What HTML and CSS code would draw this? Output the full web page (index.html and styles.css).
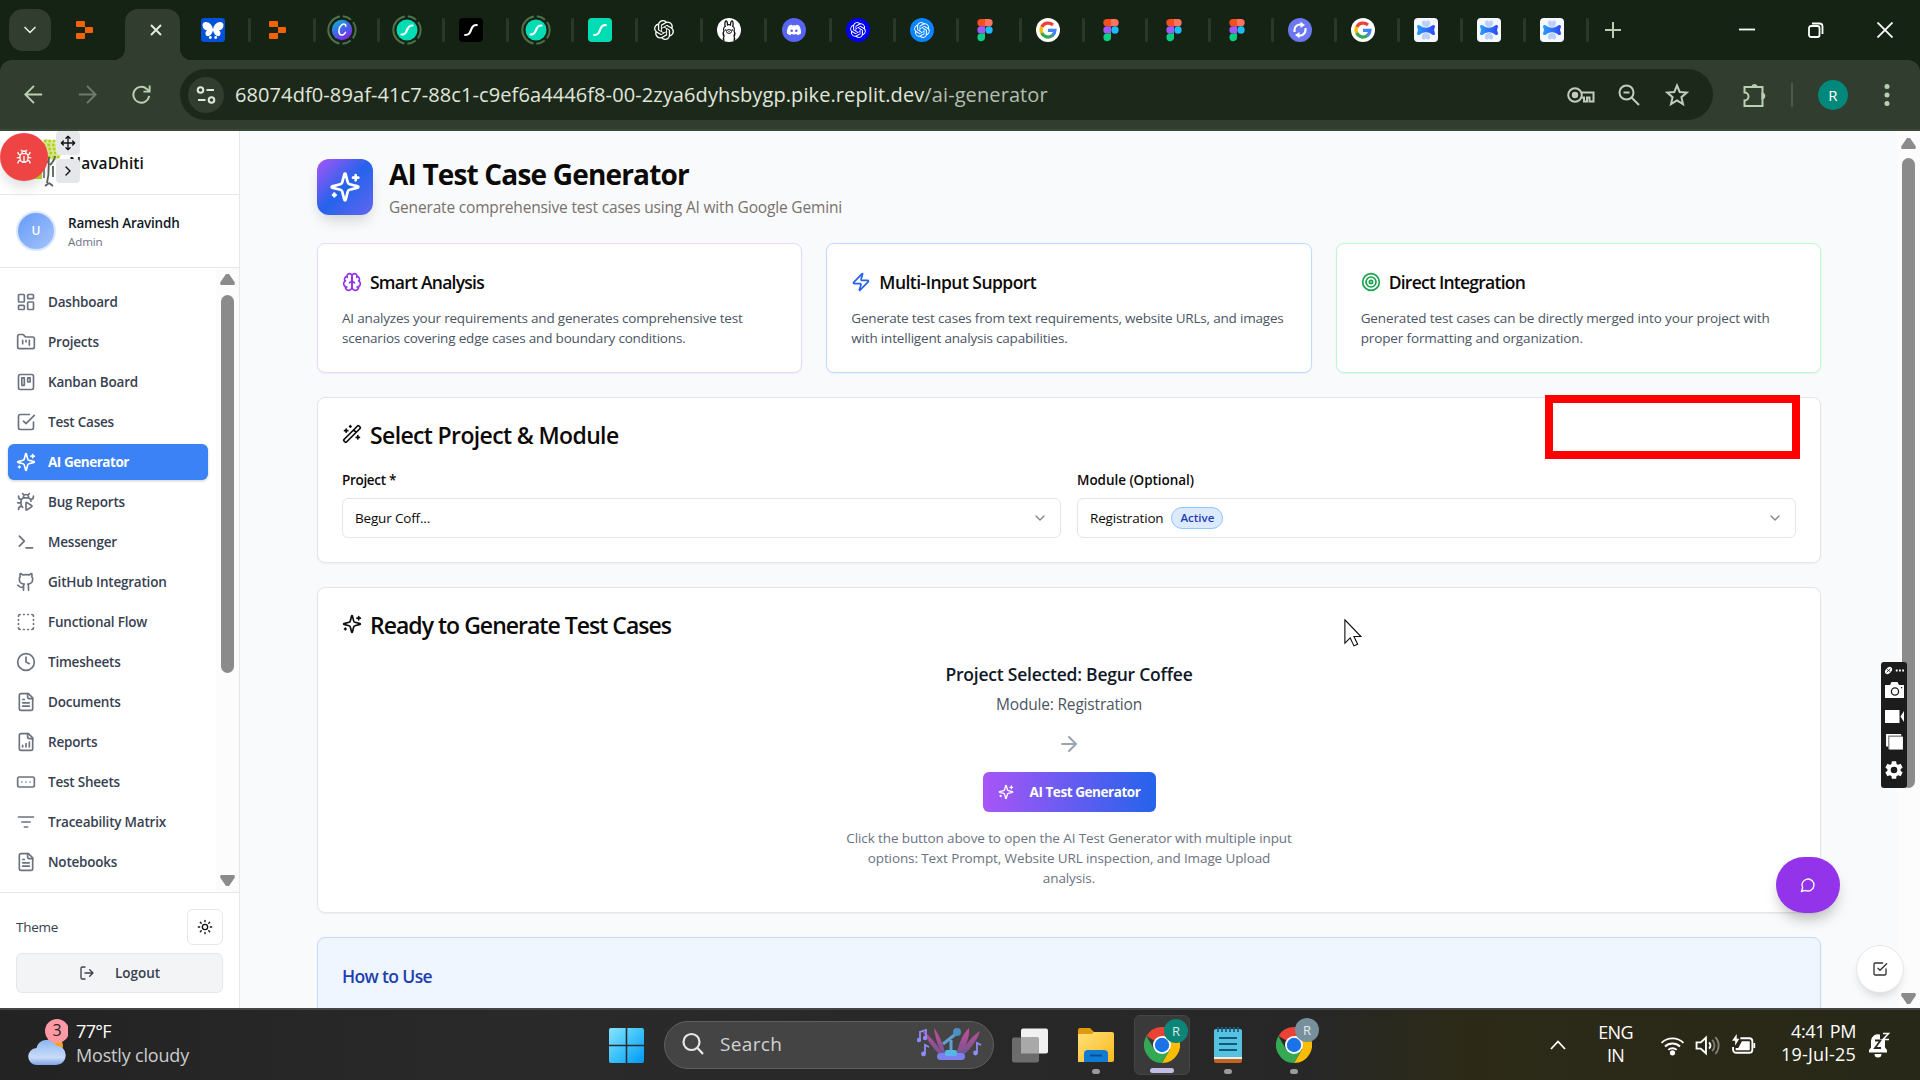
FILE: index.html
```html
<!DOCTYPE html>
<html lang="en">
<head>
<meta charset="utf-8">
<title>AI Test Case Generator</title>
<link rel="stylesheet" href="styles.css">
</head>
<body>
<svg class="defs" aria-hidden="true">
  <linearGradient id="g-canva" x1="0" y1="0" x2="0.6" y2="1"><stop offset="0" stop-color="#00c4cc"/><stop offset=".5" stop-color="#3a6ee8"/><stop offset="1" stop-color="#7d2ae8"/></linearGradient>
  <linearGradient id="g-win" x1="0" y1="0" x2="1" y2="1"><stop offset="0" stop-color="#8ae4ff"/><stop offset=".5" stop-color="#3cc2f9"/><stop offset="1" stop-color="#0098f8"/></linearGradient>
  <linearGradient id="g-folder" x1="0" y1="0" x2="1" y2="1"><stop offset="0" stop-color="#ffe07a"/><stop offset="1" stop-color="#f9b91c"/></linearGradient>
  <linearGradient id="g-cloud" x1="0" y1="0" x2="0" y2="1"><stop offset="0" stop-color="#8db6f2"/><stop offset=".7" stop-color="#c9dcf8"/><stop offset="1" stop-color="#7ea3e6"/></linearGradient>
  <linearGradient id="g-blade" x1="0" y1="0" x2="0" y2="1"><stop offset="0" stop-color="#e44ba8"/><stop offset="1" stop-color="#6c5b9e"/></linearGradient>
  <linearGradient id="g-bow" x1="0" y1="0" x2="1" y2="0"><stop offset="0" stop-color="#2a9dff"/><stop offset="1" stop-color="#3048f5"/></linearGradient>

  <symbol id="replit" viewBox="0 0 24 24"><path fill="#f26207" d="M4 3h7a1 1 0 0 1 1 1v5H4a1 1 0 0 1-1-1V4a1 1 0 0 1 1-1zM12 9h7a1 1 0 0 1 1 1v4a1 1 0 0 1-1 1h-7zM4 15h8v5a1 1 0 0 1-1 1H4a1 1 0 0 1-1-1v-4a1 1 0 0 1 1-1z"/></symbol>
  <symbol id="butterfly" viewBox="0 0 24 24"><rect width="24" height="24" rx="3" fill="#0052d9"/><path fill="#fff" d="M12 11.500C11.500 7 8 3.800 4.500 4 2.200 4.200 1.300 6 1.600 8c.3 2.600 2 4.200 4.600 4.600C4 13.600 4 16.500 5.500 18c3 .8 5.500-1.500 6.500-5.500 1 4 3.500 6.300 6.500 5.500 1.500-1.500 1.500-4.400-.7-5.400 2.600-.4 4.300-2 4.600-4.600.3-2-.6-3.800-2.900-4C16 3.800 12.500 7 12 11.500z"/><circle cx="9.300" cy="19.500" r="1.400" fill="#fff"/><circle cx="14.700" cy="19.500" r="1.400" fill="#fff"/></symbol>
  <symbol id="canva" viewBox="0 0 30 30"><circle cx="15" cy="15" r="13.700" fill="none" stroke="#4c7048" stroke-width="2" stroke-dasharray="9 3 9 3 38 3 9 3 9"/><circle cx="15" cy="15" r="10.200" fill="url(#g-canva)"/><path d="M18.800 11.200c.3-2-2-2.800-4-1.400-3 2.200-4 8-1.500 9.800 1.800 1.200 4.200-.2 5.200-2.200" fill="none" stroke="#fff" stroke-width="1.500" stroke-linecap="round"/></symbol>
  <symbol id="slash-ring" viewBox="0 0 30 30"><circle cx="15" cy="15" r="13.700" fill="none" stroke="#4c7048" stroke-width="2" stroke-dasharray="9 3 9 3 38 3 9 3 9"/><circle cx="15" cy="15" r="10.500" fill="#00dcb4"/><path d="M9.500 19.500c4 0 4.500-2 5.500-4.500s1.500-4.500 5.500-4.500" fill="none" stroke="#fff" stroke-width="2.200" stroke-linecap="round"/></symbol>
  <symbol id="slash" viewBox="0 0 24 24"><path d="M5 18c5 0 5.500-2.500 7-6s2-6 7-6" fill="none" stroke="#fff" stroke-width="2.600" stroke-linecap="round"/></symbol>
  <symbol id="openai" viewBox="0 0 24 24"><path fill="currentColor" d="M22.2819 9.8211a5.9847 5.9847 0 0 0-.5157-4.9108 6.0462 6.0462 0 0 0-6.5098-2.9A6.0651 6.0651 0 0 0 4.9807 4.1818a5.9847 5.9847 0 0 0-3.9977 2.9 6.0462 6.0462 0 0 0 .7427 7.0966 5.98 5.98 0 0 0 .511 4.9107 6.051 6.051 0 0 0 6.5146 2.9001A5.9847 5.9847 0 0 0 13.2599 24a6.0557 6.0557 0 0 0 5.7718-4.2058 5.9894 5.9894 0 0 0 3.9977-2.9001 6.0557 6.0557 0 0 0-.7475-7.0729zm-9.022 12.6081a4.4755 4.4755 0 0 1-2.8764-1.0408l.1419-.0804 4.7783-2.7582a.7948.7948 0 0 0 .3927-.6813v-6.7369l2.02 1.1686a.071.071 0 0 1 .038.052v5.5826a4.504 4.504 0 0 1-4.4945 4.4944zm-9.6607-4.1254a4.4708 4.4708 0 0 1-.5346-3.0137l.142.0852 4.783 2.7582a.7712.7712 0 0 0 .7806 0l5.8428-3.3685v2.3324a.0804.0804 0 0 1-.0332.0615L9.74 19.9502a4.4992 4.4992 0 0 1-6.1408-1.6464zM2.3408 7.8956a4.485 4.485 0 0 1 2.3655-1.9728V11.6a.7664.7664 0 0 0 .3879.6765l5.8144 3.3543-2.0201 1.1685a.0757.0757 0 0 1-.071 0l-4.8303-2.7865A4.504 4.504 0 0 1 2.3408 7.872zm16.5963 3.8558L13.1038 8.364 15.1192 7.2a.0757.0757 0 0 1 .071 0l4.8303 2.7913a4.4944 4.4944 0 0 1-.6765 8.1042v-5.6772a.79.79 0 0 0-.407-.667zm2.0107-3.0231l-.142-.0852-4.7735-2.7818a.7759.7759 0 0 0-.7854 0L9.409 9.2297V6.8974a.0662.0662 0 0 1 .0284-.0615l4.8303-2.7866a4.4992 4.4992 0 0 1 6.6802 4.66zM8.3065 12.863l-2.02-1.1638a.0804.0804 0 0 1-.038-.0567V6.0742a4.4992 4.4992 0 0 1 7.3757-3.4537l-.142.0805L8.704 5.459a.7948.7948 0 0 0-.3927.6813zm1.0976-2.3654l2.602-1.4998 2.6069 1.4998v2.9994l-2.5974 1.4997-2.6067-1.4997Z"/></symbol>
  <symbol id="llama" viewBox="0 0 24 24"><circle cx="12" cy="12" r="12" fill="#fff"/><path d="M7 23c-1-2-.5-4 0-5-1.200-1.500-1-3.500 0-5-.8-2 0-4 1.200-4.500C7.500 6 8 3 9 3s1.500 2.500 1.500 4c1-.4 2-.4 3 0 0-1.500.5-4 1.500-4s1.500 3 .8 5.500C17 9 17.800 11 17 13c1 1.500 1.200 3.500 0 5 .5 1 1 3 0 5" fill="none" stroke="#111" stroke-width="1.300"/><ellipse cx="12" cy="13.500" rx="2.500" ry="1.900" fill="none" stroke="#111" stroke-width="1"/><circle cx="8.800" cy="12" r=".8"/><circle cx="15.200" cy="12" r=".8"/><path d="M12 13v1" stroke="#111"/></symbol>
  <symbol id="discord" viewBox="0 0 24 24"><circle cx="12" cy="12" r="12" fill="#5865f2"/><path fill="#fff" d="M17 7.600A11 11 0 0 0 14.200 6.700l-.4.800a10 10 0 0 0-3.600 0l-.4-.8A11 11 0 0 0 7 7.600C5.200 10.300 4.700 13 5 15.600a11 11 0 0 0 3.400 1.700l.8-1.200-1.100-.6c2.500 1.200 5.400 1.200 7.800 0l-1.100.6.800 1.200a11 11 0 0 0 3.400-1.700c.3-3-.5-5.600-2-8z"/><circle cx="9.700" cy="12.700" r="1.300" fill="#5865f2"/><circle cx="14.300" cy="12.700" r="1.300" fill="#5865f2"/></symbol>
  <symbol id="figma" viewBox="0 0 24 24"><path fill="#f24e1e" d="M8 1h4v7.300H8A3.650 3.650 0 0 1 8 1z"/><path fill="#ff7262" d="M12 1h4a3.650 3.650 0 0 1 0 7.300h-4z"/><path fill="#a259ff" d="M8 8.300h4v7.300H8a3.650 3.650 0 0 1 0-7.300z"/><circle cx="16" cy="12" r="3.650" fill="#1abcfe"/><path fill="#0acf83" d="M8 15.600h4v3.700a3.800 3.800 0 1 1-4-3.700z"/></symbol>
  <symbol id="google" viewBox="0 0 24 24"><circle cx="12" cy="12" r="12" fill="#fff"/><g fill="none" stroke-width="3.200"><path stroke="#ea4335" d="M5.800 9A7 7 0 0 1 16.900 7"/><path stroke="#fbbc05" d="M5.800 15.200a7 7 0 0 1 0-6.400"/><path stroke="#34a853" d="M16.700 17.300A7 7 0 0 1 5.800 15"/><path stroke="#4285f4" d="M12 12.300h7a7 7 0 0 1-2.500 5.100"/></g></symbol>
  <symbol id="sync" viewBox="0 0 24 24"><circle cx="12" cy="12" r="12" fill="#6b78f0"/><path d="M6.500 14V12A5.500 5.500 0 0 1 13 6.600M17.500 10v2a5.500 5.500 0 0 1-6.500 5.400" fill="none" stroke="#fff" stroke-width="2.200"/><path fill="#fff" d="M12.500 3.800 17 7l-4.500 3zM11.500 14 7 17l4.500 3.200z"/></symbol>
  <symbol id="bow" viewBox="0 0 24 24"><rect width="24" height="24" rx="4" fill="#f5f7fe"/><path fill="#b9d0fb" d="M8 5.500a2 2 0 0 1 4-1.500 2 2 0 0 1 4 1.500C16 8 14 9 12 9S8 8 8 5.500zM8 18.500a2 2 0 0 0 4 1.500 2 2 0 0 0 4-1.500C16 16 14 15 12 15s-4 1-4 3.500z"/><path fill="url(#g-bow)" d="M3 8.500c0-1.500 1.500-2 3-1 2 1.500 4 2.200 6 2.200s4-.7 6-2.200c1.500-1 3-.5 3 1L20 12l1 3.500c0 1.500-1.500 2-3 1-2-1.500-4-2.200-6-2.200s-4 .7-6 2.200c-1.500 1-3 .5-3-1L4 12z"/></symbol>

  <symbol id="dashboard" viewBox="0 0 24 24"><rect width="7" height="9" x="3" y="3" rx="1"/><rect width="7" height="5" x="14" y="3" rx="1"/><rect width="7" height="9" x="14" y="12" rx="1"/><rect width="7" height="5" x="3" y="16" rx="1"/></symbol>
  <symbol id="folder-kanban" viewBox="0 0 24 24"><path d="M4 20h16a2 2 0 0 0 2-2V8a2 2 0 0 0-2-2h-7.930a2 2 0 0 1-1.660-.9l-.82-1.200A2 2 0 0 0 7.930 3H4a2 2 0 0 0-2 2v13c0 1.100.9 2 2 2Z"/><path d="M8 10v4M12 10v2M16 10v6"/></symbol>
  <symbol id="trello" viewBox="0 0 24 24"><rect width="18" height="18" x="3" y="3" rx="2"/><rect width="3" height="9" x="7" y="7"/><rect width="3" height="5" x="14" y="7"/></symbol>
  <symbol id="check-square" viewBox="0 0 24 24"><path d="m9 11 3 3L22 4"/><path d="M21 12v7a2 2 0 0 1-2 2H5a2 2 0 0 1-2-2V5a2 2 0 0 1 2-2h11"/></symbol>
  <symbol id="sparkles" viewBox="0 0 24 24"><path d="M9.937 15.500A2 2 0 0 0 8.500 14.063l-6.135-1.582a.5.5 0 0 1 0-.962L8.500 9.936A2 2 0 0 0 9.937 8.500l1.582-6.135a.5.5 0 0 1 .963 0L14.063 8.500A2 2 0 0 0 15.500 9.937l6.135 1.581a.5.5 0 0 1 0 .964L15.500 14.063a2 2 0 0 0-1.437 1.437l-1.582 6.135a.5.5 0 0 1-.963 0z"/><path d="M20 3v4M22 5h-4M4 17v2M5 18H3"/></symbol>
  <symbol id="bug-play" viewBox="0 0 24 24"><path d="M12.765 21.522a.5.5 0 0 1-.765-.424v-8.196a.5.5 0 0 1 .765-.424l5.878 3.674a1 1 0 0 1 0 1.696z"/><path d="M14.120 3.880 16 2M18 11a4 4 0 0 0-4-4h-4a4 4 0 0 0-4 4v3a6.100 6.100 0 0 0 2 4.500M20.970 5c0 2.100-1.600 3.800-3.500 4M3 21c0-2.100 1.700-3.900 3.800-4M6 13H2M6.530 9C4.600 8.800 3 7.100 3 5M8 2l1.880 1.880M9 7.130v-1a3.003 3.003 0 1 1 6 0v1"/></symbol>
  <symbol id="terminal" viewBox="0 0 24 24"><path d="m4 17 6-6-6-6M12 19h8"/></symbol>
  <symbol id="github" viewBox="0 0 24 24"><path d="M15 22v-4a4.800 4.800 0 0 0-1-3.500c3 0 6-2 6-5.500.08-1.250-.27-2.480-1-3.500.28-1.150.28-2.350 0-3.500 0 0-1 0-3 1.500-2.640-.5-5.360-.5-8 0C6 2 5 2 5 2c-.3 1.150-.3 2.350 0 3.500A5.403 5.403 0 0 0 4 9c0 3.500 3 5.500 6 5.500-.39.49-.68 1.050-.85 1.650-.17.6-.22 1.230-.15 1.850v4"/><path d="M9 18c-4.510 2-5-2-7-2"/></symbol>
  <symbol id="box-select" viewBox="0 0 24 24"><path d="M5 3a2 2 0 0 0-2 2M19 3a2 2 0 0 1 2 2M21 19a2 2 0 0 1-2 2M5 21a2 2 0 0 1-2-2M9 3h1M9 21h1M14 3h1M14 21h1M3 9v1M21 9v1M3 14v1M21 14v1"/></symbol>
  <symbol id="clock" viewBox="0 0 24 24"><circle cx="12" cy="12" r="10"/><path d="M12 6v6l4 2"/></symbol>
  <symbol id="file-text" viewBox="0 0 24 24"><path d="M15 2H6a2 2 0 0 0-2 2v16a2 2 0 0 0 2 2h12a2 2 0 0 0 2-2V7Z"/><path d="M14 2v4a2 2 0 0 0 2 2h4M10 9H8M16 13H8M16 17H8"/></symbol>
  <symbol id="file-chart" viewBox="0 0 24 24"><path d="M15 2H6a2 2 0 0 0-2 2v16a2 2 0 0 0 2 2h12a2 2 0 0 0 2-2V7Z"/><path d="M14 2v4a2 2 0 0 0 2 2h4M8 18v-2M12 18v-4M16 18v-6"/></symbol>
  <symbol id="rect-dots" viewBox="0 0 24 24"><rect width="20" height="12" x="2" y="6" rx="2"/><path d="M12 12h.01M17 12h.01M7 12h.01"/></symbol>
  <symbol id="filter" viewBox="0 0 24 24"><path d="M3 6h18M7 12h10M10 18h4"/></symbol>
  <symbol id="sun" viewBox="0 0 24 24"><circle cx="12" cy="12" r="4"/><path d="M12 2v2M12 20v2M4.930 4.930l1.410 1.410M17.660 17.660l1.410 1.410M2 12h2M20 12h2M6.340 17.660l-1.410 1.410M19.070 4.930l-1.410 1.410"/></symbol>
  <symbol id="log-out" viewBox="0 0 24 24"><path d="M9 21H5a2 2 0 0 1-2-2V5a2 2 0 0 1 2-2h4M16 17l5-5-5-5M21 12H9"/></symbol>
  <symbol id="brain" viewBox="0 0 24 24"><path d="M12 5a3 3 0 1 0-5.997.125 4 4 0 0 0-2.526 5.770 4 4 0 0 0 .556 6.588A4 4 0 1 0 12 18Z"/><path d="M12 5a3 3 0 1 1 5.997.125 4 4 0 0 1 2.526 5.770 4 4 0 0 1-.556 6.588A4 4 0 1 1 12 18Z"/><path d="M15 13a4.500 4.500 0 0 1-3-4 4.500 4.500 0 0 1-3 4M17.599 6.500a3 3 0 0 0 .399-1.375M6.003 5.125A3 3 0 0 0 6.401 6.500M3.477 10.896a4 4 0 0 1 .585-.396M19.938 10.500a4 4 0 0 1 .585.396M6 18a4 4 0 0 1-1.967-.516M19.967 17.484A4 4 0 0 1 18 18"/></symbol>
  <symbol id="zap" viewBox="0 0 24 24"><path d="M4 14a1 1 0 0 1-.78-1.630l9.900-10.200a.5.5 0 0 1 .86.460l-1.920 6.020A1 1 0 0 0 13 10h7a1 1 0 0 1 .78 1.630l-9.900 10.200a.5.5 0 0 1-.86-.46l1.920-6.020A1 1 0 0 0 11 14z"/></symbol>
  <symbol id="target" viewBox="0 0 24 24"><circle cx="12" cy="12" r="10"/><circle cx="12" cy="12" r="6"/><circle cx="12" cy="12" r="2"/></symbol>
  <symbol id="wand" viewBox="0 0 24 24"><path d="m21.640 3.640-1.280-1.280a1.210 1.210 0 0 0-1.720 0L2.360 18.640a1.210 1.210 0 0 0 0 1.720l1.280 1.280a1.200 1.200 0 0 0 1.720 0L21.640 5.360a1.200 1.200 0 0 0 0-1.720M14 7l3 3M5 6v4M19 14v4M10 2v2M7 8H3M21 16h-4M11 3H9"/></symbol>
  <symbol id="chev-down" viewBox="0 0 24 24"><path d="m6 9 6 6 6-6"/></symbol>
  <symbol id="chev-right" viewBox="0 0 24 24"><path d="m9 18 6-6-6-6"/></symbol>
  <symbol id="arrow-right" viewBox="0 0 24 24"><path d="M5 12h14M12 5l7 7-7 7"/></symbol>
  <symbol id="arrow-left" viewBox="0 0 24 24"><path d="M21 12H4M12.500 3l-9 9 9 9"/></symbol>
  <symbol id="arrow-fwd" viewBox="0 0 24 24"><path d="M3 12h17M11.500 3l9 9-9 9"/></symbol>
  <symbol id="message" viewBox="0 0 24 24"><path d="M7.900 20A9 9 0 1 0 4 16.100L2 22Z"/></symbol>
  <symbol id="bug" viewBox="0 0 24 24"><path d="m8 2 1.880 1.880M14.120 3.880 16 2M9 7.130v-1a3.003 3.003 0 1 1 6 0v1M12 20c-3.300 0-6-2.700-6-6v-3a4 4 0 0 1 4-4h4a4 4 0 0 1 4 4v3c0 3.300-2.700 6-6 6M12 20v-9M6.530 9C4.600 8.800 3 7.100 3 5M6 13H2M3 21c0-2.100 1.700-3.900 3.800-4M20.970 5c0 2.100-1.600 3.800-3.500 4M22 13h-4M17.200 17c2.100.1 3.800 1.900 3.800 4"/></symbol>
  <symbol id="move" viewBox="0 0 24 24"><path d="M12 2v20M2 12h20M15 19l-3 3-3-3M19 9l3 3-3 3M5 9l-3 3 3 3M9 5l3-3 3 3"/></symbol>
  <symbol id="chrome" viewBox="0 0 36 36"><path fill="#ea4335" d="M18 18 2.400 9A18 18 0 0 1 33.600 9z"/><path fill="#fbbc04" d="M18 9h15.600A18 18 0 0 1 18 36l7.800-13.500z"/><path fill="#34a853" d="M2.400 9 10.200 22.500H25.800L18 36A18 18 0 0 1 2.400 9z"/><circle cx="18" cy="18" r="9" fill="#fff"/><circle cx="18" cy="18" r="7.200" fill="#1a73e8"/></symbol>
</svg>

<div class="screen">
  <header class="tabstrip">
    <button class="tab-search"><svg class="ic s20"><use href="#chev-down"/></svg></button>
    <div class="tab first"><svg class="fav"><use href="#replit"/></svg></div>
    <div class="tab active"><svg class="x" viewBox="0 0 12 12"><path d="M1 1l10 10M11 1 1 11"/></svg></div>
    <div class="tab after"><svg class="fav"><use href="#butterfly"/></svg></div>
    <div class="tab"><svg class="fav"><use href="#replit"/></svg></div>
    <div class="tab"><svg class="fav ring"><use href="#canva"/></svg></div>
    <div class="tab"><svg class="fav ring"><use href="#slash-ring"/></svg></div>
    <div class="tab"><svg class="fav tile black"><use href="#slash"/></svg></div>
    <div class="tab"><svg class="fav ring"><use href="#slash-ring"/></svg></div>
    <div class="tab"><svg class="fav tile mint"><use href="#slash"/></svg></div>
    <div class="tab"><svg class="fav ai"><use href="#openai"/></svg></div>
    <div class="tab"><svg class="fav"><use href="#llama"/></svg></div>
    <div class="tab"><svg class="fav"><use href="#discord"/></svg></div>
    <div class="tab"><svg class="fav disc deep"><use href="#openai"/></svg></div>
    <div class="tab narrow"><svg class="fav disc sky"><use href="#openai"/></svg></div>
    <div class="tab narrow"><svg class="fav"><use href="#figma"/></svg></div>
    <div class="tab narrow"><svg class="fav"><use href="#google"/></svg></div>
    <div class="tab narrow"><svg class="fav"><use href="#figma"/></svg></div>
    <div class="tab narrow"><svg class="fav"><use href="#figma"/></svg></div>
    <div class="tab narrow"><svg class="fav"><use href="#figma"/></svg></div>
    <div class="tab narrow"><svg class="fav"><use href="#sync"/></svg></div>
    <div class="tab narrow"><svg class="fav"><use href="#google"/></svg></div>
    <div class="tab narrow"><svg class="fav"><use href="#bow"/></svg></div>
    <div class="tab narrow"><svg class="fav"><use href="#bow"/></svg></div>
    <div class="tab narrow"><svg class="fav"><use href="#bow"/></svg></div>
    <svg class="newtab" viewBox="0 0 16 16"><path d="M8 0v16M0 8h16"/></svg>
    <div class="winctl">
      <svg viewBox="0 0 16 16"><path d="M0 7.500h16"/></svg>
      <svg viewBox="0 0 16 16"><rect x="1" y="4" width="10.500" height="11" rx="2"/><path d="M4 1.500h7.500a3 3 0 0 1 3 3V12"/></svg>
      <svg viewBox="0 0 16 16"><path d="M.5.500l15 15M15.500.500l-15 15"/></svg>
    </div>
  </header>

  <div class="toolbar">
    <svg class="ic tb back"><use href="#arrow-left"/></svg>
    <svg class="ic tb fwd"><use href="#arrow-fwd"/></svg>
    <svg class="ic tb reload" viewBox="0 0 24 24"><path d="M20 13.500A8.300 8.300 0 1 1 17.500 6.200L20 8.500M20.500 2.500v6.500H14"/></svg>
    <div class="omnibox">
      <span class="siteinfo"><svg viewBox="0 0 20 20"><circle cx="4.500" cy="5" r="2.800"/><path d="M10.500 5H18M2 15h7.500"/><circle cx="15.500" cy="15" r="2.800"/></svg></span>
      <span class="url">68074df0-89af-41c7-88c1-c9ef6a4446f8-00-2zya6dyhsbygp.pike.replit.dev<i>/ai-generator</i></span>
      <svg class="ob key" viewBox="0 0 28 20"><circle cx="8" cy="10" r="6.800"/><circle cx="8" cy="10" r="2.200" fill="currentColor"/><path d="M14.500 7.500H26.500v9h-4v-4h-2.500v4h-3v-4h-3"/></svg>
      <svg class="ob zoom" viewBox="0 0 24 24"><circle cx="9.500" cy="9.500" r="7"/><path d="M14.500 14.500 22 22M6.500 9.500h6"/></svg>
      <svg class="ob star" viewBox="0 0 24 24"><path d="m12 2.500 2.700 6.500 7 .6-5.300 4.600 1.600 6.900-6-3.700-6 3.700 1.600-6.900-5.300-4.600 7-.6z"/></svg>
    </div>
    <svg class="ob ext" viewBox="0 0 26 26"><path d="M2.500 5H20.500V24h-18v-5.500a3.500 3.500 0 0 0 0-8z"/><path fill="currentColor" d="M10 5a2.600 2.600 0 0 1 5 0zM20.500 11.500a2.600 2.600 0 0 1 0 5z"/></svg>
    <span class="tbsep"></span>
    <span class="avatar-r">R</span>
    <svg class="kebab" viewBox="0 0 6 24"><circle cx="3" cy="3.500" r="2.500"/><circle cx="3" cy="12" r="2.500"/><circle cx="3" cy="20.500" r="2.500"/></svg>
  </div>

  <div class="page">
    <aside class="sidebar">
      <div class="brand"><span>NavaDhiti</span></div>
      <div class="user">
        <span class="uav">U</span>
        <div class="uinfo"><b>Ramesh Aravindh</b><small>Admin</small></div>
      </div>
      <div class="navwrap">
        <nav class="nav">
          <a><svg class="ic s20"><use href="#dashboard"/></svg><span>Dashboard</span></a>
          <a><svg class="ic s20"><use href="#folder-kanban"/></svg><span>Projects</span></a>
          <a><svg class="ic s20"><use href="#trello"/></svg><span>Kanban Board</span></a>
          <a><svg class="ic s20"><use href="#check-square"/></svg><span>Test Cases</span></a>
          <a class="on"><svg class="ic s20"><use href="#sparkles"/></svg><span>AI Generator</span></a>
          <a><svg class="ic s20"><use href="#bug-play"/></svg><span>Bug Reports</span></a>
          <a><svg class="ic s20"><use href="#terminal"/></svg><span>Messenger</span></a>
          <a><svg class="ic s20"><use href="#github"/></svg><span>GitHub Integration</span></a>
          <a><svg class="ic s20"><use href="#box-select"/></svg><span>Functional Flow</span></a>
          <a><svg class="ic s20"><use href="#clock"/></svg><span>Timesheets</span></a>
          <a><svg class="ic s20"><use href="#file-text"/></svg><span>Documents</span></a>
          <a><svg class="ic s20"><use href="#file-chart"/></svg><span>Reports</span></a>
          <a><svg class="ic s20"><use href="#rect-dots"/></svg><span>Test Sheets</span></a>
          <a><svg class="ic s20"><use href="#filter"/></svg><span>Traceability Matrix</span></a>
          <a><svg class="ic s20"><use href="#file-text"/></svg><span>Notebooks</span></a>
        </nav>
        <div class="sbar side"><i class="up"></i><b></b><i class="down"></i></div>
      </div>
      <div class="sfoot">
        <div class="theme"><span>Theme</span><button><svg class="ic s16"><use href="#sun"/></svg></button></div>
        <button class="logout"><svg class="ic s16"><use href="#log-out"/></svg><span>Logout</span></button>
      </div>
    </aside>

    <main class="main">
      <div class="content">
        <div class="hero">
          <span class="heroic"><svg class="ic"><use href="#sparkles"/></svg></span>
          <div><h1>AI Test Case Generator</h1><p>Generate comprehensive test cases using AI with Google Gemini</p></div>
        </div>
        <div class="features">
          <section class="card feat purple"><h3><svg class="ic s20"><use href="#brain"/></svg>Smart Analysis</h3><p>AI analyzes your requirements and generates comprehensive test<br>scenarios covering edge cases and boundary conditions.</p></section>
          <section class="card feat blue"><h3><svg class="ic s20"><use href="#zap"/></svg>Multi-Input Support</h3><p>Generate test cases from text requirements, website URLs, and images<br>with intelligent analysis capabilities.</p></section>
          <section class="card feat green"><h3><svg class="ic s20"><use href="#target"/></svg>Direct Integration</h3><p>Generated test cases can be directly merged into your project with<br>proper formatting and organization.</p></section>
        </div>
        <section class="card">
          <h2><svg class="ic s20"><use href="#wand"/></svg><span>Select Project &amp; Module</span></h2>
          <div class="fields">
            <div><label class="tight">Project *</label><div class="select"><span>Begur Coff...</span><svg class="ic s16"><use href="#chev-down"/></svg></div></div>
            <div><label>Module (Optional)</label><div class="select"><span>Registration</span><em>Active</em><svg class="ic s16"><use href="#chev-down"/></svg></div></div>
          </div>
        </section>
        <section class="card ready">
          <h2><svg class="ic s20"><use href="#sparkles"/></svg><span>Ready to Generate Test Cases</span></h2>
          <div class="center">
            <h4>Project Selected: Begur Coffee</h4>
            <p class="mod">Module: Registration</p>
            <svg class="ic arrow"><use href="#arrow-right"/></svg>
            <button class="gen"><svg class="ic s16"><use href="#sparkles"/></svg><span>AI Test Generator</span></button>
            <p class="hint">Click the button above to open the AI Test Generator with multiple input<br>options: Text Prompt, Website URL inspection, and Image Upload<br>analysis.</p>
          </div>
        </section>
        <section class="card how"><h3>How to Use</h3></section>
      </div>
      <div class="sbar mainbar"><i class="up"></i><b></b><i class="down"></i></div>
    </main>
  </div>

  <footer class="taskbar">
    <div class="weather">
      <svg viewBox="0 0 40 52"><circle cx="26" cy="27" r="9" fill="#f7a21b"/><path fill="url(#g-cloud)" d="M9 46a8.500 8.500 0 0 1-.5-17A10.500 10.500 0 0 1 28 26.500a9.500 9.500 0 0 1 0 19.500z"/><circle cx="29" cy="12" r="12" fill="#ff99a4"/></svg>
      <span class="badge3">3</span>
      <div><p class="deg">77°F</p><p class="dim">Mostly cloudy</p></div>
    </div>
    <div class="apps">
      <svg class="win" viewBox="0 0 36 36"><path fill="url(#g-win)" d="M2 0h15.200v17.200H0V2a2 2 0 0 1 2-2zM18.800 0H34a2 2 0 0 1 2 2v15.200H18.800zM0 18.800h17.200V36H2a2 2 0 0 1-2-2zM18.800 18.800H36V34a2 2 0 0 1-2 2H18.800z"/></svg>
      <div class="search">
        <svg class="mag" viewBox="0 0 24 24"><circle cx="10.500" cy="10" r="8"/><path d="m16.500 16 5.500 6"/></svg>
        <span>Search</span>
        <svg class="orn" viewBox="0 0 66 34"><path fill="url(#g-blade)" opacity=".85" d="M25 30C18 24 8 10 5 3c8 6 17 16 22 27zM27 30C21 20 18 10 17 1c6 8 10 18 12 29zM39 30c2-12 6-22 13-29 1 10-4 20-11 29zM42 30C46 20 55 9 63 4c-3 10-11 20-19 26z"/><path d="M34 24V13M26 17l14-11" stroke="#5f9fd0" stroke-width="3"/><circle cx="40" cy="5" r="4" fill="#4b8fc4"/><rect x="20" y="26" width="28" height="7" rx="3.500" fill="#7b82ee"/><rect x="28" y="23" width="12" height="6" rx="2" fill="#58b5e8"/><path d="M3 13V5l6-2v8M60 26V16l4 2M8 27v-9l4 2" fill="none" stroke="#8f8cf5" stroke-width="1.800"/><circle cx="2" cy="13" r="2.200" fill="#8f8cf5"/><circle cx="8" cy="11" r="2.200" fill="#8f8cf5"/><circle cx="58.500" cy="26" r="2.400" fill="#8f8cf5"/><circle cx="6.500" cy="27" r="2.400" fill="#8f8cf5"/></svg>
      </div>
      <svg class="tv" viewBox="0 0 36 34"><rect x="9" y="0" width="27" height="25" rx="2" fill="#f1f1f1"/><rect x="0" y="9" width="27" height="25" rx="2" fill="#6c6c6c"/><path fill="#a9a9a9" d="M9 9h18v16H9z"/></svg>
      <div class="app"><svg viewBox="0 0 36 34"><path fill="#e09a0c" d="M0 2a2 2 0 0 1 2-2h10l4 4v6H0z"/><path fill="url(#g-folder)" d="M0 6h14l2-2h18a2 2 0 0 1 2 2v26a2 2 0 0 1-2 2H0z"/><path fill="#0f7bd3" d="M6 34V26a4 4 0 0 1 4-4h16a4 4 0 0 1 4 4v8z"/><path stroke="#0a4f90" stroke-width="2" d="M12 27.500h12"/></svg><i></i></div>
      <div class="app cur"><svg><use href="#chrome"/></svg><span class="rb">R</span><i></i></div>
      <div class="app"><svg viewBox="0 0 36 36"><path fill="#c4631b" d="M4 31h28v3a2 2 0 0 1-2 2H6a2 2 0 0 1-2-2z"/><path fill="#e8eef2" d="M4 28h28v4H4z"/><path fill="#57c2e0" d="M4 4a2 2 0 0 1 2-2h24a2 2 0 0 1 2 2v26H4z"/><path d="M8 0v5M12 0v5M16 0v5M20 0v5M24 0v5M28 0v5" stroke="#1c5f85" stroke-width="1.800"/><path d="M9 11h18M9 17h18M9 23h18" stroke="#0d5a7c" stroke-width="2.200"/></svg><i></i></div>
      <div class="app"><svg><use href="#chrome"/></svg><span class="rb gray">R</span><i></i></div>
    </div>
    <div class="tray">
      <svg class="chev" viewBox="0 0 16 10"><path d="m1 9 7-7.500L15 9"/></svg>
      <div class="lang"><p>ENG</p><p>IN</p></div>
      <svg class="wifi" viewBox="0 0 24 20"><path d="M1.500 7.500a15 15 0 0 1 21 0M4.800 11a10.300 10.300 0 0 1 14.400 0M8 14.200a5.800 5.800 0 0 1 8 0"/><circle cx="12" cy="17" r="1.600" fill="#fff"/></svg>
      <svg class="spk" viewBox="0 0 24 20"><path d="M1.500 7v6h4l5 4.500v-15L5.500 7zM13.500 7a4.500 4.500 0 0 1 0 6"/><path opacity=".4" d="M16.500 4.500a8 8 0 0 1 0 11M19.500 2a11.500 11.500 0 0 1 0 16"/></svg>
      <svg class="bat" viewBox="0 0 24 22"><path d="M9 4h8.500a3 3 0 0 1 3 3v8a3 3 0 0 1-3 3H5a3 3 0 0 1-3-3v-2.500"/><path fill="#fff" d="M10.500 7H18v8.500H4.500v-2H7zM21.500 8.500h1.700v5h-1.700zM5.500 0 1 6.500h3v4.500l4-6.500H5.500z" stroke="none"/></svg>
      <div class="clock"><p class="time">4:41 PM</p><p class="date">19-Jul-25</p></div>
      <svg class="bell" viewBox="0 0 24 26"><path fill="#fff" d="M2 20.500V18l2-2.500V9a7 7 0 0 1 9-6.500V7h5v8.500l2 2.500v2.500zM7.500 22h7a3.500 3.500 0 0 1-7 0z"/><path d="M8 8.500h5.500L8 16h6" fill="none" stroke="#2a2a19" stroke-width="1.800"/><path d="M16 1.500h5.500L16 7.500h6" fill="none" stroke="#fff" stroke-width="1.600"/></svg>
    </div>
  </footer>

  <svg class="logo" viewBox="0 0 32 50"><path d="M11 3l4-1 4 1 3 0 2 4 3 2-1 5 3 5-3 3-5 2-4-3-6-2-1-6z" fill="#bcd630" opacity=".55"/><path d="M12 4h12M11 8h15M12 12h15M13 16h15M16 20h12" stroke="#b2cf1c" stroke-width="2.500" stroke-dasharray="2.500 2"/><path d="M2 32h8v10H2z" fill="#bcd630"/><path d="M17 20c-1 8 1 14-2 26M17 46l-4 3M17 46l4 3M18 28c4-4 5-6 5-9M17 26c-3-3-5-3-6-3M21 29v11" stroke="#59635a" stroke-width="1.800" fill="none"/><path d="M12 27v14" stroke="#59635a" stroke-width="1.500"/></svg>
  <div class="bugbtn"><svg class="ic s16"><use href="#bug"/></svg></div>
  <div class="mini m1"><svg class="ic s16"><use href="#move"/></svg></div>
  <div class="mini m2"><svg class="ic s16"><use href="#chev-right"/></svg></div>
  <div class="redbox"></div>
  <svg class="cursor" viewBox="0 0 19 30"><path d="M.8.800v25l5.700-5.500 4 8.500 4-1.800-4-8.200h7.500z" fill="#fff" stroke="#111" stroke-width="1.200"/></svg>
  <div class="chatfab"><svg class="ic s16"><use href="#message"/></svg></div>
  <div class="rec">
    <svg class="r0" viewBox="0 0 22 9"><ellipse cx="5" cy="4.500" rx="4.500" ry="3" transform="rotate(-45 5 4.500)" fill="#fff"/><path d="M3 6.500 7 2.500M3 3l4 3" stroke="#1c1c1c" stroke-width=".9"/><path fill="#fff" d="M13 3.500h2v2h-2zM16.500 3.500h2v2h-2zM20 3.500h2v2h-2z"/></svg>
    <svg viewBox="0 0 19 16"><path fill="#fff" d="M0 3h5l1.500-3h6L14 3h5v13H0z"/><circle cx="10" cy="9.500" r="3.600" fill="none" stroke="#1c1c1c" stroke-width="1.300"/><path fill="#1c1c1c" d="M16 5h1.200v1.200H16z"/></svg>
    <svg viewBox="0 0 19 16"><path fill="#fff" d="M0 2h14.500v13H0zM15.500 8.500 19 3v11z"/></svg>
    <svg viewBox="0 0 19 18"><path fill="#fff" d="M0 0h17v2H2.500v12H0z"/><path fill="#fff" d="M3.500 3H19v14.500H3.500z"/><path stroke="#aaa" d="M3 17V2.500h15" fill="none"/></svg>
    <svg class="gear" viewBox="0 0 24 24"><path fill="#fff" d="M19.140 12.940c.04-.3.060-.61.060-.94 0-.32-.02-.64-.07-.94l2.030-1.580a.49.490 0 0 0 .12-.61l-1.920-3.320a.488.488 0 0 0-.59-.22l-2.390.96c-.5-.38-1.030-.7-1.620-.94l-.36-2.540a.484.484 0 0 0-.48-.41h-3.840c-.24 0-.43.170-.47.410l-.36 2.540c-.59.240-1.130.570-1.620.940l-2.390-.96c-.22-.08-.47 0-.59.220L2.740 8.870c-.12.210-.08.470.12.610l2.030 1.580c-.05.3-.09.630-.09.940s.02.640.070.940l-2.030 1.580a.49.490 0 0 0-.12.610l1.920 3.320c.12.220.370.290.590.220l2.390-.96c.5.380 1.030.7 1.620.940l.36 2.540c.05.240.240.410.480.410h3.840c.24 0 .44-.17.470-.41l.36-2.540c.59-.24 1.130-.56 1.620-.94l2.390.96c.22.080.47 0 .59-.22l1.920-3.320c.12-.22.070-.47-.12-.61l-2.010-1.580zM12 15.600A3.600 3.600 0 1 1 12 8.400a3.600 3.600 0 0 1 0 7.200z"/></svg>
  </div>
  <div class="taskfab"><svg class="ic s16"><use href="#check-square"/></svg></div>
</div>
</body>
</html>
```
FILE: styles.css
```css
* { box-sizing: border-box; }
body { margin: 0; background: #152315; }
body, button { font-family: "Open Sans", "Noto Sans", sans-serif; }
h1, h2, h3, h4, p { margin: 0; }
button { border: 0; padding: 0; }
.defs { position: absolute; width: 0; height: 0; }
svg { display: block; flex: none; }
.ic { fill: none; stroke: currentColor; stroke-width: 2; stroke-linecap: round; stroke-linejoin: round; }
.s16 { width: 16px; height: 16px; }
.s20 { width: 20px; height: 20px; }

.screen { position: relative; display: flex; flex-direction: column; width: 1920px; height: 1080px; overflow: hidden; }

/* browser tab strip */
.tabstrip { display: flex; align-items: center; height: 60px; flex: none; background: #152315; padding-left: 9px; }
.tab-search { width: 42px; height: 42px; border-radius: 14px; background: #303d2f; color: #e3ebdf; display: grid; place-items: center; }
.tab { position: relative; width: 64.5px; height: 24px; padding-left: 16px; flex: none; display: flex; align-items: center; }
.tab.narrow { width: 63px; padding-left: 15px; }
.tab::after { content: ""; position: absolute; right: -1.5px; top: 0; width: 3px; height: 24px; background: #2b3829; border-radius: 1px; }
.tab.first { width: 74px; padding-left: 22px; }
.tab.first::after, .tab.active::after { display: none; }
.tab.after { width: 69.5px; padding-left: 21px; }
.tab.active { align-self: flex-end; width: 55px; height: 51px; padding: 0 0 9px 7px; background: #303d2f; border-radius: 13px 13px 0 0; justify-content: center; }
.tab.active::before { content: ""; position: absolute; left: -12px; right: -12px; bottom: 0; height: 12px; background: radial-gradient(circle at 0 0, transparent 12px, #303d2f 12.5px) left / 12px 12px no-repeat, radial-gradient(circle at 100% 0, transparent 12px, #303d2f 12.5px) right / 12px 12px no-repeat; }
.fav { width: 24px; height: 24px; }
.fav.ring { width: 30px; height: 30px; margin-left: -3px; }
.fav.tile { border-radius: 4px; padding: 2px; }
.black { background: #000; }
.mint { background: #00dcb4; }
.fav.ai { color: #fff; padding: 2px; margin-left: -1px; }
.fav.disc { border-radius: 50%; padding: 4px; color: #fff; }
.deep { background: #0000f5; }
.sky { background: #0a84ff; }
.x { width: 12px; height: 12px; fill: none; stroke: #e3ebdf; stroke-width: 2; }
.newtab { width: 16px; height: 16px; margin-left: 17px; stroke: #b9ccb2; stroke-width: 2; }
.winctl { margin-left: auto; padding-right: 27px; display: flex; gap: 53px; }
.winctl svg { width: 16px; height: 16px; fill: none; stroke: #fff; stroke-width: 1.800; }

/* toolbar */
.toolbar { display: flex; align-items: center; height: 71px; flex: none; background: #303d2f; border-bottom: 2px solid #3b483a; border-radius: 12px 12px 0 0; padding-left: 22px; }
.tb { width: 23px; height: 23px; color: #b9d1b1; margin-right: 31px; stroke-linecap: butt; stroke-linejoin: miter; }
.fwd { color: #6f7c6c; }
.reload { margin-right: 27px; }
.omnibox { display: flex; align-items: center; width: 1533px; height: 51px; border-radius: 26px; background: #1c291a; padding: 0 24px 0 8px; color: #c2ccbd; }
.siteinfo { width: 36px; height: 36px; border-radius: 50%; background: #303d2f; display: grid; place-items: center; }
.siteinfo svg { width: 20px; height: 20px; fill: none; stroke: #dfe8da; stroke-width: 2; }
.url { flex: 1; padding-left: 11px; font-size: 20px; line-height: 28px; letter-spacing: .0047em; color: #e0e6dc; white-space: nowrap; }
.url i { font-style: normal; color: #b4beb0; }
.ob { fill: none; stroke: currentColor; stroke-width: 2; }
.key { width: 28px; height: 20px; margin-right: 22px; }
.zoom, .star { width: 24px; height: 24px; }
.zoom { margin-right: 24px; }
.ext { width: 26px; height: 26px; margin-left: 29px; color: #b9d1b1; }
.tbsep { width: 2px; height: 24px; background: #4a5a47; margin-left: 23px; }
.avatar-r { width: 30px; height: 30px; border-radius: 50%; background: #00897b; color: #fff; font-size: 15px; line-height: 30px; text-align: center; margin-left: 25px; }
.kebab { width: 6px; height: 24px; margin-left: 36px; fill: #b9d1b1; }

/* page */
.page { display: flex; height: 877px; flex: none; background: #f9fafb; }
.sidebar { width: 240px; flex: none; display: flex; flex-direction: column; background: #fff; border-right: 1px solid #e5e7eb; }
.brand { height: 64px; flex: none; border-bottom: 1px solid #e5e7eb; display: flex; align-items: center; padding-left: 69px; font-weight: 600; font-size: 15.500px; letter-spacing: .004em; color: #111; }
.user { height: 73px; flex: none; border-bottom: 1px solid #e5e7eb; display: flex; align-items: center; padding-left: 16px; }
.uav { width: 40px; height: 40px; border-radius: 50%; border: 2px solid #dbe7fd; background: linear-gradient(135deg, #669bf7, #a4c3fb); color: #fff; font-size: 12px; font-weight: 600; text-align: center; line-height: 36px; }
.uinfo { padding-left: 12px; display: flex; flex-direction: column; align-items: flex-start; }
.uinfo b { font-size: 13.500px; line-height: 20px; font-weight: 600; letter-spacing: -.0167em; color: #111827; }
.uinfo small { font-size: 11.600px; line-height: 17px; letter-spacing: -.012em; color: #6b7280; }
.navwrap { display: flex; height: 625px; flex: none; border-bottom: 1px solid #e5e7eb; }
.nav { width: 216px; padding: 16px 8px; display: flex; flex-direction: column; gap: 4px; overflow: hidden; }
.nav a { height: 36px; flex: none; display: flex; align-items: center; gap: 12px; padding-left: 8px; border-radius: 6px; color: #6b7280; white-space: nowrap; }
.nav a span { font-size: 13.500px; font-weight: 600; letter-spacing: -.016em; color: #374151; }
.nav .on { background: #3b82f6; color: #fff; box-shadow: 0 1px 3px rgba(0, 0, 0, .2); }
.nav .on span { color: #fff; font-weight: 700; letter-spacing: -.034em; }
.sbar { display: flex; flex-direction: column; align-items: center; background: #fcfcfc; }
.sbar b { width: 13px; border-radius: 7px; background: #8b8b8b; }
.sbar i { width: 15px; height: 11px; background: #8b8b8b; clip-path: polygon(40% 0, 60% 0, 100% 80%, 95% 100%, 5% 100%, 0 80%); }
.sbar .down { transform: scaleY(-1); margin-top: auto; }
.side { width: 23px; padding: 6px 0 6px; }
.side b { height: 378px; margin-top: 10px; }
.sfoot { padding: 16px 16px 15px; display: flex; flex-direction: column; gap: 8px; }
.theme { display: flex; align-items: center; justify-content: space-between; font-size: 13.500px; letter-spacing: -.02em; color: #374151; }
.theme button { width: 36px; height: 36px; border: 1px solid #e5e7eb; border-radius: 6px; background: #fff; display: grid; place-items: center; color: #111; }
.logout { height: 40px; border: 1px solid #e5e7eb; border-radius: 6px; background: #f3f4f6; display: flex; align-items: center; justify-content: center; gap: 20px; font-size: 13.500px; font-weight: 600; color: #374151; }

.main { flex: 1; display: flex; min-width: 0; }
.content { width: 1657px; padding: 24px 76px 0 77px; display: flex; flex-direction: column; gap: 24px; overflow: hidden; }
.hero { display: flex; align-items: center; gap: 16px; height: 64px; flex: none; }
.heroic { width: 56px; height: 56px; border-radius: 12px; background: linear-gradient(135deg, #a855f7, #2563eb 50%, #6366f1); display: grid; place-items: center; color: #fff; box-shadow: 0 8px 14px -3px rgba(0, 0, 0, .16); }
.heroic svg { width: 32px; height: 32px; }
.hero h1 { font-size: 28px; line-height: 40px; font-weight: 700; letter-spacing: -.0295em; color: #0c0a09; }
.hero p { font-size: 15.500px; line-height: 26px; letter-spacing: -.0114em; color: #78716c; }
.features { display: grid; grid-template-columns: repeat(3, minmax(0, 1fr)); gap: 24px; }
.card { flex: none; background: #fff; border: 1px solid #e7e5e4; border-radius: 8px; padding: 24px; box-shadow: 0 1px 2px rgba(0, 0, 0, .05); white-space: nowrap; }
.card h2, .card h3 { display: flex; align-items: center; gap: 8px; line-height: 28px; font-weight: 600; color: #0c0a09; }
.card h3 { font-size: 17.500px; letter-spacing: -.043em; }
.card h2 { height: 28px; font-size: 23px; letter-spacing: -.0276em; }
.card h2 svg { margin-bottom: 4px; }
.card h2 span { padding-bottom: 2px; }
.card.blue h3 { letter-spacing: -.031em; }
.card.ready h2 { letter-spacing: -.0427em; }
.feat p { margin-top: 12px; font-size: 13.500px; line-height: 20px; letter-spacing: -.0138em; color: #4b5563; }
.green.feat p { letter-spacing: -.0096em; }
.purple { border-color: #e9d5ff; }
.purple svg { color: #9333ea; }
.blue { border-color: #bfdbfe; }
.blue svg { color: #2563eb; }
.green { border-color: #bbf7d0; }
.green svg { color: #16a34a; }
.fields { display: grid; grid-template-columns: 1fr 1fr; gap: 16px; margin-top: 20px; }
.fields label { display: block; font-size: 13.500px; line-height: 20px; font-weight: 600; letter-spacing: -.0035em; color: #0c0a09; margin-bottom: 8px; }
.fields .tight { letter-spacing: -.0235em; }
.select { height: 40px; border: 1px solid #e5e5e5; border-radius: 6px; display: flex; align-items: center; padding: 0 12px; font-size: 13.500px; letter-spacing: -.013em; color: #0c0a09; }
.select > svg { margin-left: auto; color: #858585; }
.select em { margin-left: 8px; height: 22px; padding: 0 8px; border: 1px solid #93c5fd; border-radius: 11px; background: #dbeafe; color: #1e40af; font: 600 11.500px/20px "Open Sans", sans-serif; letter-spacing: 0; }
.center { display: flex; flex-direction: column; align-items: center; text-align: center; padding-top: 20px; }
.center h4 { font-size: 17.500px; line-height: 28px; font-weight: 600; letter-spacing: -.0131em; color: #111827; }
.mod { font-size: 15.500px; line-height: 24px; margin-top: 4px; letter-spacing: -.0119em; color: #4b5563; }
.arrow { width: 24px; height: 24px; margin-top: 16px; color: #9ca3af; }
.gen { width: 173px; height: 40px; margin-top: 16px; border-radius: 6px; background: linear-gradient(90deg, #a855f7, #2563eb); display: flex; align-items: center; justify-content: center; gap: 16px; color: #fff; font-size: 13.500px; font-weight: 700; letter-spacing: -.0323em; }
.hint { margin-top: 16px; font-size: 13.500px; line-height: 20px; letter-spacing: -.008em; color: #6b7280; }
.how { height: 200px; background: #eff6ff; border-color: #bfdbfe; }
.card.how h3 { color: #1e40af; letter-spacing: -.0366em; }
.mainbar { width: 23px; padding: 7px 0 4px; }
.mainbar b { height: 630px; margin-top: 9px; }

/* taskbar */
.taskbar { flex: 1; display: flex; align-items: center; border-top: 2px solid #454545; background: linear-gradient(90deg, #232323, #2a2a2a 30%, #272728 68%, #2c2a17 76%, #282818 100%); color: #fff; font-size: 18px; line-height: 24px; white-space: nowrap; }
.weather { position: relative; display: flex; align-items: center; width: 609px; padding-left: 28px; gap: 8px; }
.weather svg { width: 40px; height: 52px; }
.badge3 { position: absolute; left: 45px; top: -1px; width: 24px; text-align: center; color: #222; font-size: 16px; line-height: 24px; }
.weather p { line-height: 24px; }
.weather > div { padding-bottom: 4px; }
.deg { letter-spacing: -.036em; }
.dim { color: #ccc; letter-spacing: -.0099em; }
.apps { display: flex; align-items: center; }
.win { width: 35px; height: 35px; }
.search { width: 330px; height: 48px; margin-left: 20px; border-radius: 24px; border: 1px solid #5f5f5f; background: #444; display: flex; align-items: center; padding: 0 10px 2px 16px; color: #d2d2d2; font-size: 19px; letter-spacing: .018em; }
.mag { width: 24px; height: 24px; margin-right: 15px; fill: none; stroke: #e8e8e8; stroke-width: 2.200; }
.orn { width: 66px; height: 42px; margin-left: auto; }
.tv { width: 36px; height: 35px; margin: 0 20px 0 18px; }
.app { position: relative; width: 56px; height: 60px; margin-right: 10px; display: grid; place-items: center; border-radius: 6px; }
.app svg { width: 36px; height: 36px; }
.app i { position: absolute; left: 24px; bottom: 1px; width: 8px; height: 5px; border-radius: 3px; background: #9a9a9a; }
.cur { background: #3a3a3b; border: 1px solid #454545; }
.cur i { left: 15px; width: 24px; background: #c3bce4; }
.rb { position: absolute; left: 29px; top: 3px; width: 24px; height: 24px; border-radius: 50%; background: #0a8577; color: #d8ebe6; font-size: 13px; line-height: 24px; text-align: center; }
.rb.gray { background: #78909c; color: #e4e9ec; }
.tray { margin-left: auto; display: flex; align-items: center; padding-right: 29px; }
.tray svg { fill: none; stroke: #fff; stroke-width: 1.800; }
.tray .bell { stroke: none; width: 24px; height: 26px; margin-left: 11px; }
.chev { width: 16px; height: 10px; margin-right: 32px; }
.lang { text-align: center; margin-right: 27px; padding-bottom: 2px; letter-spacing: -.035em; }
.lang p, .clock p { line-height: 23px; }
.wifi { width: 25px; height: 21px; margin-right: 10px; }
.spk { width: 25px; height: 21px; margin-right: 11px; }
.bat { width: 25px; height: 23px; margin-right: 25px; }
.clock { text-align: right; padding-bottom: 4px; }
.time { letter-spacing: -.018em; }
.date { letter-spacing: .0113em; }

/* floating items */
.logo { position: absolute; left: 32px; top: 137px; width: 32px; height: 50px; }
.bugbtn { position: absolute; left: 0; top: 133px; width: 48px; height: 48px; border-radius: 50%; background: #ef4444; color: #fff; display: grid; place-items: center; box-shadow: 0 8px 14px -2px rgba(0, 0, 0, .14); }
.mini { position: absolute; left: 56px; width: 24px; height: 24px; border-radius: 4px; background: #e5e7eb; color: #111; display: grid; place-items: center; }
.m1 { top: 131px; }
.m2 { top: 159px; }
.redbox { position: absolute; left: 1545px; top: 395px; width: 255px; height: 64px; border: 8px solid #f00; }
.cursor { position: absolute; left: 1344px; top: 619px; width: 18px; height: 28px; }
.chatfab { position: absolute; left: 1776px; top: 857px; width: 64px; height: 56px; border-radius: 28px; background: #9333ea; color: #fff; display: grid; place-items: center; box-shadow: 0 9px 14px -3px rgba(0, 0, 0, .25); }
.rec { position: absolute; left: 1881px; top: 662px; width: 26px; height: 126px; border-radius: 3px; background: #1c1c1c; display: flex; flex-direction: column; align-items: center; padding-top: 4px; }
.rec svg { width: 19px; height: 16px; margin-bottom: 10px; }
.rec .r0 { width: 20px; height: 9px; margin-bottom: 7px; }
.rec .gear { width: 22px; height: 22px; margin-top: -1px; }
.taskfab { position: absolute; left: 1856px; top: 945px; width: 48px; height: 48px; border-radius: 50%; background: #fff; border: 1px solid #e5e7eb; color: #333; display: grid; place-items: center; box-shadow: 0 6px 10px -3px rgba(0, 0, 0, .15); }
```
